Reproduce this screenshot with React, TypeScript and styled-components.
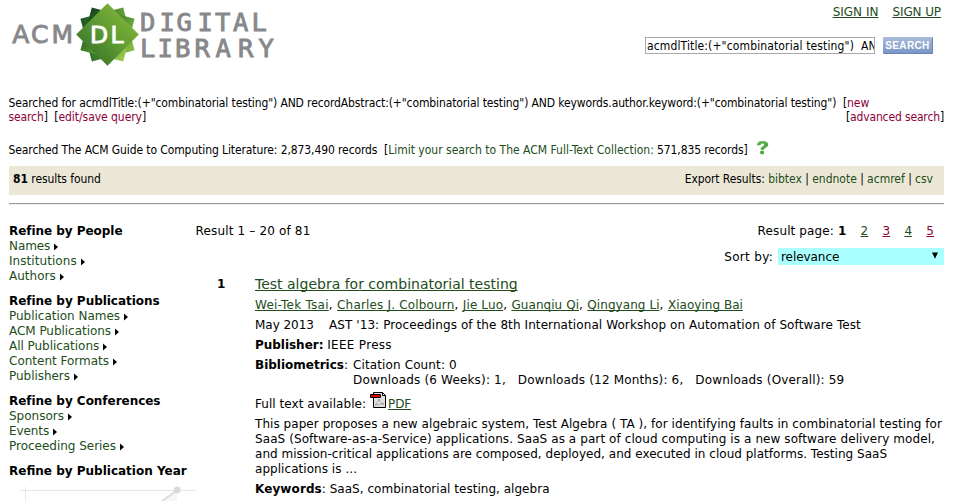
import React from 'react';
import styled, { createGlobalStyle } from 'styled-components';

const verdana = `"DejaVu Sans", Verdana, sans-serif`;
const tahoma = `"DejaVu Sans Condensed", Tahoma, sans-serif`;

const GlobalStyle = createGlobalStyle`
  * { box-sizing: border-box; }
  html, body { margin: 0; padding: 0; background: #fff; overflow: hidden; }
  body { font: 12px/15px ${verdana}; color: #000; }
`;

const Page = styled.div`
  width: 960px;
  height: 501px;
  padding: 0 16px 0 9px;
  overflow: hidden;
  white-space: pre;
`;

const T = styled.span<{ $ls?: number }>`
  letter-spacing: ${(p) => p.$ls ?? 0}px;
`;
const B = styled(T)`
  font-weight: bold;
`;
const Link = styled.a<{ $ls?: number; $visited?: boolean; $plain?: boolean }>`
  color: ${(p) => (p.$visited ? '#8b0038' : '#224c1a')};
  letter-spacing: ${(p) => p.$ls ?? 0}px;
  text-decoration: ${(p) => (p.$plain ? 'none' : 'underline')};
  text-decoration-thickness: 1px;
  text-underline-offset: 1px;
  text-decoration-skip-ink: none;
`;

const Header = styled.header`
  display: flex;
  justify-content: space-between;
  height: 96px;
`;
const Logo = styled.svg`
  display: block;
  width: 272px;
  height: 70px;
`;
const Account = styled.div`
  display: flex;
  flex-direction: column;
  align-items: flex-end;
  padding-top: 5px;
`;
const AccountLinks = styled.nav`
  display: flex;
  gap: 14px;
  height: 32px;
  padding-right: 3px;
`;
const SearchForm = styled.div`
  display: flex;
  gap: 8px;
  padding-right: 11px;
`;
const SearchInput = styled.div`
  width: 230px;
  height: 17px;
  border: 1px solid #a9a9a9;
  padding: 1px 1px 0;
  font: 12px/15px ${tahoma};
  overflow: hidden;
`;
const SearchButton = styled.button`
  width: 50px;
  height: 17px;
  border: 0;
  border-right: 1px solid #6c86b4;
  border-bottom: 1px solid #6c86b4;
  border-radius: 1px;
  padding: 0;
  background: linear-gradient(#a9bcdc, #7b96c6);
  color: #fff;
  font: bold 10px/17px "Liberation Sans", Arial, sans-serif;
  letter-spacing: 0.35px;
`;

const Query = styled.section`
  font: 12px/14px ${tahoma};
  height: 47px;
  margin-left: -0.5px;
`;
const QueryLine = styled.div`
  display: flex;
  justify-content: space-between;
`;
const Scope = styled.section`
  display: flex;
  font: 12px/14px ${tahoma};
  height: 23px;
  margin-left: -0.5px;
`;
const HelpIcon = styled.svg`
  width: 13px;
  height: 15px;
  margin: -3px 0 0 8px;
`;
const ResultBar = styled.section`
  display: flex;
  justify-content: space-between;
  height: 29px;
  padding: 6px 11px 0 4px;
  background: #ece8d8;
  font: 12px/14px ${tahoma};
`;
const Rule = styled.hr`
  height: 2px;
  margin: 8px 0 19px;
  border: 0;
  border-top: 1px solid #999;
  border-bottom: 1px solid #ededed;
`;

const Body = styled.main`
  display: grid;
  grid-template-columns: 186.5px 748.5px;
`;
const Sidebar = styled.aside`
  display: flex;
  flex-direction: column;
`;
const Facet = styled.div`
  margin-bottom: 10px;
`;
const FacetItem = styled.div`
  display: flex;
  align-items: center;
`;
const Arrow = styled.svg`
  width: 4px;
  height: 8px;
  margin: 0 0 0 4px;
`;
const YearChart = styled.svg`
  display: block;
  width: 190px;
  height: 16px;
  margin-top: -3px;
`;

const Results = styled.div`
  display: flex;
  flex-direction: column;
`;
const Between = styled.div`
  display: flex;
  justify-content: space-between;
  height: 24px;
`;
const Pager = styled.nav`
  display: flex;
  padding-right: 10px;
  gap: 14.3px;
`;
const SortRow = styled.div`
  display: flex;
  justify-content: flex-end;
  gap: 5px;
  height: 28px;
`;
const SortLabel = styled.label`
  padding-top: 1px;
  line-height: 17px;
`;
const Select = styled.div`
  display: flex;
  align-items: center;
  justify-content: space-between;
  width: 166px;
  height: 17px;
  padding: 1px 5px 0 3px;
  background: #aff;
`;
const SelectArrow = styled.svg`
  width: 8px;
  height: 7px;
  margin-bottom: 3px;
`;
const Result = styled.article`
  display: grid;
  grid-template-columns: 59.5px 689px;
`;
const Rank = styled.div`
  padding: 1px 0 0 21.5px;
  font-weight: bold;
`;
const Details = styled.div`
  display: flex;
  flex-direction: column;
  gap: 5px;
`;
const Title = styled.div`
  font-size: 14px;
  line-height: 16px;
  margin-bottom: 1px;
`;
const Metrics = styled.div`
  display: grid;
  grid-template-columns: 98px 1fr;
`;
const FullText = styled.div`
  display: flex;
  align-items: flex-end;
  height: 19px;
`;
const PdfIcon = styled.svg`
  width: 16px;
  height: 16px;
  margin: 0 2px 4px 4px;
`;

type Item = [string, number];
const facets: { title: string; ls: number; items: Item[] }[] = [
  { title: 'Refine by People', ls: -0.04, items: [['Names', -0.1], ['Institutions', 0.06], ['Authors', 0]] },
  {
    title: 'Refine by Publications',
    ls: -0.03,
    items: [['Publication Names', -0.02], ['ACM Publications', -0.04], ['All Publications', -0.04], ['Content Formats', 0], ['Publishers', -0.04]],
  },
  { title: 'Refine by Conferences', ls: -0.03, items: [['Sponsors', 0], ['Events', -0.1], ['Proceeding Series', -0.02]] },
  { title: 'Refine by Publication Year', ls: 0, items: [] },
];

const authors: Item[] = [
  ['Wei-Tek Tsai', 0.24],
  ['Charles J. Colbourn', 0.17],
  ['Jie Luo', 0.12],
  ['Guanqiu Qi', 0.05],
  ['Qingyang Li', 0.06],
  ['Xiaoying Bai', 0.03],
];

const abstract: Item[] = [
  ['This paper proposes a new algebraic system, Test Algebra ( TA ), for identifying faults in combinatorial testing for', 0.056],
  ['SaaS (Software-as-a-Service) applications. SaaS as a part of cloud computing is a new software delivery model,', 0.088],
  ['and mission-critical applications are composed, deployed, and executed in cloud platforms. Testing SaaS', 0.022],
  ['applications is ...', 0.047],
];

const star = (a: number) => `rotate(${a} 98.5 34.5)`;

function AcmLogo() {
  return (
    <Logo viewBox="0 0 272 70" aria-label="ACM Digital Library">
      <defs>
        <linearGradient id="front" x1="1" y1="0" x2="0" y2="1">
          <stop offset="0" stopColor="#92c03e" />
          <stop offset="0.5" stopColor="#5d9a32" />
          <stop offset="1" stopColor="#2b6425" />
        </linearGradient>
        <linearGradient id="mid" gradientUnits="userSpaceOnUse" x1="76" y1="12" x2="122" y2="56">
          <stop offset="0" stopColor="#0f3d1c" />
          <stop offset="0.5" stopColor="#4f8f30" />
          <stop offset="1" stopColor="#a6d04d" />
        </linearGradient>
        <linearGradient id="back" gradientUnits="userSpaceOnUse" x1="70" y1="45" x2="126" y2="25">
          <stop offset="0" stopColor="#1c5424" />
          <stop offset="0.55" stopColor="#4b8b2d" />
          <stop offset="1" stopColor="#8dbf45" />
        </linearGradient>
      </defs>
      <g>
        <path d="M98.5 3.2 129.8 34.5 98.5 65.8 67.2 34.5Z" transform={star(30)} fill="url(#back)" />
        <path d="M82.8 7.4 125.6 18.8 114.2 61.6 71.4 50.2Z" fill="url(#mid)" />
        <path d="M98.5 3.2 129.8 34.5 98.5 65.8 67.2 34.5Z" fill="url(#front)" />
      </g>
      <g fontFamily='"DejaVu Sans Mono", monospace' fill="#87888b" stroke="#87888b" strokeWidth="0.9">
        <text x="3.2 22 42.5" y="43.2" fontSize="25" fontFamily='"DejaVu Sans", sans-serif'>ACM</text>
        <text x="131 150.5 167.5 188.5 206 224 242.5" y="30.8" fontSize="25.5">DIGITAL</text>
        <text x="131 148.5 166 185.5 206.5 229 249.5" y="57" fontSize="25.5">LIBRARY</text>
        <text x="81 101.5" y="43" fontSize="23.5" fill="#fff" stroke="#fff" fontFamily='"DejaVu Sans", sans-serif'>DL</text>
      </g>
    </Logo>
  );
}

export default function App() {
  return (
    <>
      <GlobalStyle />
      <Page>
        <Header>
          <AcmLogo />
          <Account>
            <AccountLinks>
              <Link>SIGN IN</Link>
              <Link $ls={-0.1}>SIGN UP</Link>
            </AccountLinks>
            <SearchForm>
              <SearchInput><T $ls={0.13}>{'acmdlTitle:(+"combinatorial testing")  AND'}</T></SearchInput>
              <SearchButton>SEARCH</SearchButton>
            </SearchForm>
          </Account>
        </Header>
        <Query>
          <QueryLine>
            <T $ls={-0.117}>
              {'Searched for acmdlTitle:(+"combinatorial testing") AND recordAbstract:(+"combinatorial testing") AND keywords.author.keyword:(+"combinatorial testing")  ['}
              <Link $plain $visited>new</Link>
            </T>
          </QueryLine>
          <QueryLine>
            <T $ls={-0.11}>
              <Link $plain $visited $ls={-0.12}>search</Link>{']  ['}
              <Link $plain $visited $ls={-0.05}>edit/save query</Link>]
            </T>
            <T $ls={-0.13}>
              [<Link $plain $visited $ls={-0.14}>advanced search</Link>]
            </T>
          </QueryLine>
        </Query>
        <Scope>
          <T $ls={-0.1}>{'Searched The ACM Guide to Computing Literature: 2,873,490 records  ['}</T>
          <Link $plain>Limit your search to The ACM Full-Text Collection:</Link>
          <T $ls={-0.12}> 571,835 records]</T>
          <HelpIcon viewBox="0 0 13 15">
            <path d="M1 5.200C1.200 2 3.300.9 6.600.9c3.400 0 5.600 1.300 5.600 3.600 0 2.900-3.600 2.800-4.200 5.200H4.500c.2-3 3.300-3.200 3.500-4.900.1-1-.6-1.300-1.500-1.300-1.200 0-1.800.6-2 1.700z" fill="#4fa843" />
            <path d="M2 3.600C3 1.900 4.500 1.600 6.600 1.600c2.300 0 3.900.7 4.500 1.800" fill="none" stroke="#7cc767" strokeWidth="1" />
            <rect x="4.200" y="10.700" width="3.800" height="3.500" rx="1" fill="#4ca63f" />
          </HelpIcon>
        </Scope>
        <ResultBar>
          <T $ls={-0.09}><B $ls={0}>81</B> results found</T>
          <T $ls={-0.08}>
            {'Export Results: '}<Link $plain>bibtex</Link>{' | '}<Link $plain>endnote</Link>{' | '}
            <Link $plain>acmref</Link>{' | '}<Link $plain>csv</Link>
          </T>
        </ResultBar>
        <Rule />
        <Body>
          <Sidebar>
            {facets.map((f) => (
              <Facet key={f.title}>
                <B as="div" $ls={f.ls}>{f.title}</B>
                {f.items.map(([name, ls]) => (
                  <FacetItem key={name}>
                    <Link $plain $ls={ls}>{name}</Link>
                    <Arrow viewBox="0 0 4 8"><path d="M0 0.500 4 4 0 7.500Z" /></Arrow>
                  </FacetItem>
                ))}
              </Facet>
            ))}
            <YearChart viewBox="0 0 190 16">
              <path d="M11 4.5H187M16.5 1V16" stroke="#e6e6e6" />
              <path d="M168 4 153 15V16H168Z" fill="#f6f6f6" />
              <path d="M168.3 4 152 16" stroke="#ddd" strokeWidth="2" />
              <circle cx="168.2" cy="4" r="3.4" fill="#d9d9d9" />
            </YearChart>
          </Sidebar>
          <Results>
            <Between>
              <T $ls={0.16}>Result 1 – 20 of 81</T>
              <Pager>
                <T $ls={0.12}>Result page: <B>1</B></T>
                <Link>2</Link>
                <Link $visited>3</Link>
                <Link>4</Link>
                <Link $visited>5</Link>
              </Pager>
            </Between>
            <SortRow>
              <SortLabel><T $ls={0.3}>Sort by:</T></SortLabel>
              <Select>
                <T $ls={-0.06}>relevance</T>
                <SelectArrow viewBox="0 0 8 7"><path d="M1 0.5H7L4 6.8Z" /></SelectArrow>
              </Select>
            </SortRow>
            <Result>
              <Rank>1</Rank>
              <Details>
                <Title><Link>Test algebra for combinatorial testing</Link></Title>
                <div>
                  {authors.map(([name, ls], i) => (
                    <React.Fragment key={name}>
                      {i > 0 && <T $ls={0.35}>{', '}</T>}
                      <Link $ls={ls}>{name}</Link>
                    </React.Fragment>
                  ))}
                </div>
                <div>
                  <T $ls={-0.04}>{'May 2013    '}</T>
                  <T $ls={0.09}>AST '13: Proceedings of the 8th International Workshop on Automation of Software Test</T>
                </div>
                <div><B $ls={-0.03}>Publisher:</B> <T $ls={0.3}>IEEE Press</T></div>
                <Metrics>
                  <div><B>Bibliometrics</B>:</div>
                  <div>
                    <T as="div" $ls={0.12}>Citation Count: 0</T>
                    <T as="div" $ls={0.17}>{'Downloads (6 Weeks): 1,   Downloads (12 Months): 6,   Downloads (Overall): 59'}</T>
                  </div>
                </Metrics>
                <FullText>
                  <T $ls={0.05}>Full text available:</T>
                  <PdfIcon viewBox="0 0 16 16">
                    <path d="M3.500.5h9l3 3v12h-12z" fill="#dedede" stroke="#000" />
                    <path d="M12.500.5v3h3z" fill="#fff" stroke="#000" />
                    <path d="M5 13c2.500-1.500 4-4 4-6 .5 3 2 4.500 5 5-3-.5-6 0-9 1z" fill="#fff" stroke="#999" strokeWidth="0.9" />
                    <path d="M.5 2.500h10v3H.5z" fill="#e00000" stroke="#000" />
                  </PdfIcon>
                  <Link $ls={-0.1}>PDF</Link>
                </FullText>
                <div>
                  {abstract.map(([line, ls]) => (
                    <T as="div" key={line} $ls={ls}>{line}</T>
                  ))}
                </div>
                <div><B $ls={0.1}>Keywords</B>: <T $ls={0.03}>SaaS, combinatorial testing, algebra</T></div>
              </Details>
            </Result>
          </Results>
        </Body>
      </Page>
    </>
  );
}
